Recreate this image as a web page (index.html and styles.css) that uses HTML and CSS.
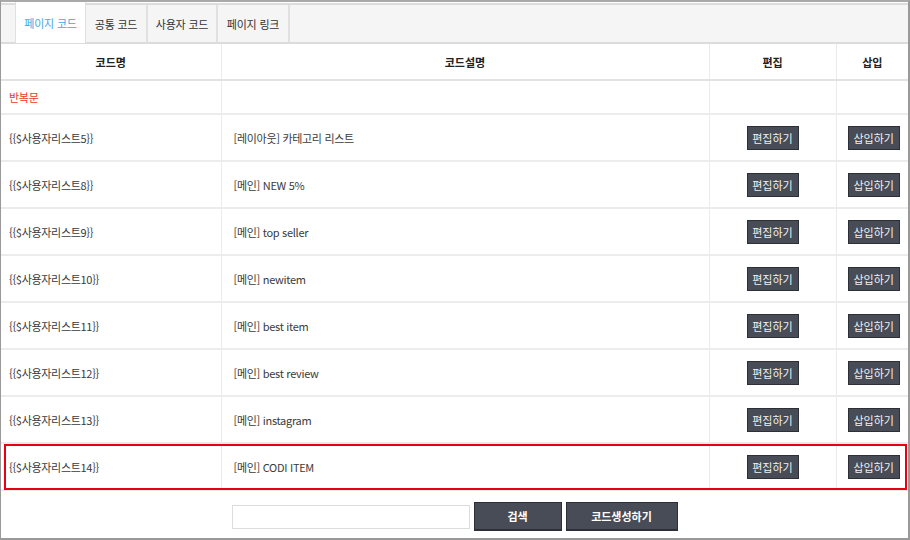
FILE: index.html
```html
<!DOCTYPE html>
<html lang="ko">
<head>
    <meta charset="UTF-8">
    <title>페이지 코드</title>
    <link rel="stylesheet" href="styles.css">
</head>
<body>
    <div class="frame">
        <div class="tabs">
            <a class="tab active">페이지 코드</a>
            <a class="tab t2">공통 코드</a>
            <a class="tab t3">사용자 코드</a>
            <a class="tab t4">페이지 링크</a>
        </div>

        <div class="table-wrap">
            <table class="codes">
                <colgroup>
                    <col class="c-name">
                    <col class="c-desc">
                    <col class="c-edit">
                    <col class="c-insert">
                </colgroup>
                <thead>
                    <tr>
                        <th>코드명</th>
                        <th>코드설명</th>
                        <th>편집</th>
                        <th>삽입</th>
                    </tr>
                </thead>
                <tbody>
                    <tr class="loop">
                        <td class="red">반복문</td>
                        <td></td>
                        <td></td>
                        <td></td>
                    </tr>
                    <tr>
                        <td>{{$사용자리스트5}}</td>
                        <td>[레이아웃] 카테고리 리스트</td>
                        <td class="mid"><button class="btn-sm">편집하기</button></td>
                        <td class="mid"><button class="btn-sm">삽입하기</button></td>
                    </tr>
                    <tr>
                        <td>{{$사용자리스트8}}</td>
                        <td>[메인] NEW 5%</td>
                        <td class="mid"><button class="btn-sm">편집하기</button></td>
                        <td class="mid"><button class="btn-sm">삽입하기</button></td>
                    </tr>
                    <tr>
                        <td>{{$사용자리스트9}}</td>
                        <td>[메인] top seller</td>
                        <td class="mid"><button class="btn-sm">편집하기</button></td>
                        <td class="mid"><button class="btn-sm">삽입하기</button></td>
                    </tr>
                    <tr>
                        <td>{{$사용자리스트10}}</td>
                        <td>[메인] newitem</td>
                        <td class="mid"><button class="btn-sm">편집하기</button></td>
                        <td class="mid"><button class="btn-sm">삽입하기</button></td>
                    </tr>
                    <tr>
                        <td>{{$사용자리스트11}}</td>
                        <td>[메인] best item</td>
                        <td class="mid"><button class="btn-sm">편집하기</button></td>
                        <td class="mid"><button class="btn-sm">삽입하기</button></td>
                    </tr>
                    <tr>
                        <td>{{$사용자리스트12}}</td>
                        <td>[메인] best review</td>
                        <td class="mid"><button class="btn-sm">편집하기</button></td>
                        <td class="mid"><button class="btn-sm">삽입하기</button></td>
                    </tr>
                    <tr>
                        <td>{{$사용자리스트13}}</td>
                        <td>[메인] instagram</td>
                        <td class="mid"><button class="btn-sm">편집하기</button></td>
                        <td class="mid"><button class="btn-sm">삽입하기</button></td>
                    </tr>
                    <tr>
                        <td>{{$사용자리스트14}}</td>
                        <td>[메인] CODI ITEM</td>
                        <td class="mid"><button class="btn-sm">편집하기</button></td>
                        <td class="mid"><button class="btn-sm">삽입하기</button></td>
                    </tr>
                </tbody>
            </table>
            <!-- selected row marker -->
            <div class="highlight"></div>
        </div>

        <div class="search">
            <input type="text" class="search-input">
            <button class="btn-lg search-btn">검색</button>
            <button class="btn-lg make-btn">코드생성하기</button>
        </div>
    </div>
</body>
</html>
```

FILE: styles.css
```css
body {
    margin: 0;
    padding: 0;
    background: #fff;
    font-family: "Noto Sans CJK KR", "Noto Sans", sans-serif;
    font-size: 11px;
    color: #3a3a3a;
}

.frame {
    width: 910px;
    height: 540px;
    box-sizing: border-box;
    border-top: 2px solid #a9a9a9;
    border-left: 1px solid #999;
    border-right: 2px solid #999;
    border-bottom: 2px solid #999;
    overflow: hidden;
}

/* tabs */
.tabs {
    display: flex;
    height: 37px;
    margin-top: 1px;
    padding-left: 14px;
    background: #f5f5f5;
    border-top: 2px solid #dcdcdc;
    border-bottom: 2px solid #dcdcdc;
}

.tab {
    display: flex;
    align-items: center;
    justify-content: center;
    height: 37px;
    border-right: 2px solid #e0e0e0;
    color: #333;
    letter-spacing: -0.2px;
    cursor: pointer;
}

.tab.active {
    width: 69px;
    height: 41px;
    margin-top: -3px;
    margin-bottom: -2px;
    background: #fff;
    border-left: 1px solid #e0e0e0;
    border-right: 1px solid #e0e0e0;
    color: #3fa9dd;
}

.tab.t2 { width: 60px; }
.tab.t3 { width: 68px; }
.tab.t4 { width: 70px; }

/* table */
.table-wrap {
    position: relative;
}

.codes {
    width: 907px;
    border-collapse: collapse;
    table-layout: fixed;
}

.c-name { width: 220px; }
.c-desc { width: 488px; }
.c-edit { width: 127px; }
.c-insert { width: 72px; }

.codes th {
    height: 35px;
    padding: 0;
    font-weight: bold;
    color: #222;
    text-align: center;
    border-bottom: 2px solid #e2e2e2;
    border-left: 1px solid #ebebeb;
}

.codes td {
    height: 45px;
    padding: 0 0 0 12px;
    border-bottom: 2px solid #ececec;
    border-left: 1px solid #ebebeb;
    white-space: nowrap;
    letter-spacing: -0.3px;
}

.codes th:first-child,
.codes td:first-child {
    border-left: none;
}

.codes td:first-child {
    padding-left: 8px;
}

.codes tr.loop td {
    height: 32px;
}

.codes td.red {
    color: #e8392c;
}

.codes td.mid {
    padding: 0;
    text-align: center;
    letter-spacing: 0;
}

.btn-sm {
    width: 52px;
    height: 24px;
    padding: 0;
    background: #474c56;
    border: 1px solid #2c3036;
    color: #f1f1f1;
    font-family: "Noto Sans CJK KR", "Noto Sans", sans-serif;
    font-size: 11px;
    cursor: pointer;
}

.codes td:nth-child(4) .btn-sm {
    margin-left: 3px;
}

.highlight {
    position: absolute;
    left: 3px;
    right: 1px;
    bottom: 1px;
    height: 42px;
    border: 2px solid #e60012;
    pointer-events: none;
}

/* search bar */
.search {
    display: flex;
    justify-content: center;
    align-items: center;
    gap: 4px;
    padding-top: 11px;
}

.search-input {
    width: 238px;
    height: 24px;
    box-sizing: border-box;
    border: 1px solid #dcdcdc;
}

.btn-lg {
    height: 29px;
    background: #474c56;
    border: 1px solid #2c3036;
    border-bottom-width: 2px;
    color: #fff;
    font-family: "Noto Sans CJK KR", "Noto Sans", sans-serif;
    font-size: 11px;
    font-weight: bold;
    cursor: pointer;
}

.search-btn { width: 88px; }
.make-btn { width: 112px; }
```
